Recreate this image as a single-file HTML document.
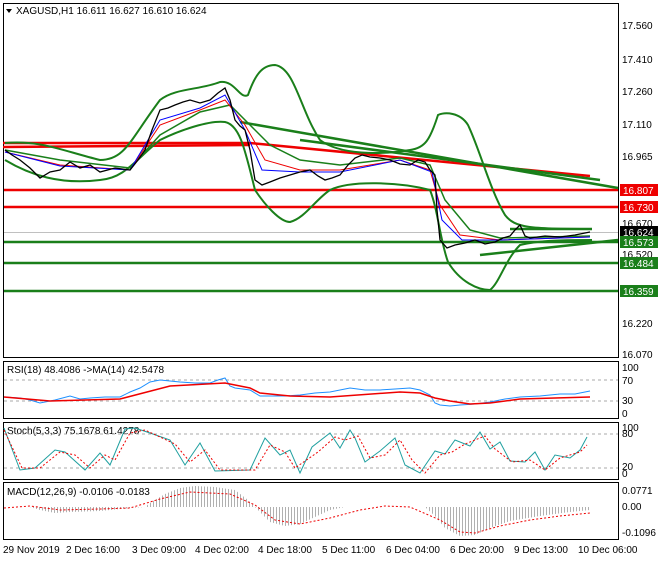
<!DOCTYPE html>
<html><head><style>
body{margin:0;width:660px;height:560px;background:#fff;font-family:"Liberation Sans",sans-serif;overflow:hidden}
svg text{font-family:"Liberation Sans",sans-serif;font-size:10px}
</style></head><body>
<svg width="660" height="560" xmlns="http://www.w3.org/2000/svg">
<defs>
<pattern id="hs" width="3" height="10" patternUnits="userSpaceOnUse"><rect x="0" y="0" width="1" height="10" fill="#b0b0b0"/></pattern>
</defs>
<rect width="660" height="560" fill="#fff"/>
<g fill="none" stroke="#000" stroke-width="1">
<rect x="3.5" y="3.5" width="615" height="354"/>
<rect x="3.5" y="361.5" width="615" height="57"/>
<rect x="3.5" y="422.5" width="615" height="57"/>
<rect x="3.5" y="482.5" width="615" height="57"/>
</g>
<polygon points="6,9 12,9 9,13" fill="#000"/>
<text x="16" y="14" fill="#000">XAGUSD,H1  16.611 16.627 16.610 16.624</text>
<line x1="4" y1="232.5" x2="618" y2="232.5" stroke="#c0c0c0"/>
<g stroke-width="2.5">
<line x1="4" y1="190" x2="618" y2="190" stroke="#e00"/>
<line x1="4" y1="207" x2="618" y2="207" stroke="#e00"/>
<line x1="4" y1="242" x2="618" y2="242" stroke="#1a7f1a"/>
<line x1="4" y1="263" x2="618" y2="263" stroke="#1a7f1a"/>
<line x1="4" y1="291" x2="618" y2="291" stroke="#1a7f1a"/>
</g>
<g fill="none" stroke-width="2.5">
<polyline points="3,143 250,143 590,176" stroke="#e00"/>
<polyline points="3,147 250,145" stroke="#e00"/>
<line x1="240" y1="122" x2="618" y2="188" stroke="#1a7f1a"/>
<line x1="300" y1="140" x2="600" y2="180" stroke="#1a7f1a"/>
<line x1="480" y1="255" x2="618" y2="240" stroke="#1a7f1a"/>
<line x1="510" y1="229" x2="592" y2="229" stroke="#1a7f1a"/>
<path d="M5,143 C40,140 60,150 100,160 C125,160 130,140 160,100 C175,88 200,90 220,82 C235,80 240,100 248,95 C255,75 262,65 275,65 C295,68 300,110 320,140 C340,155 380,155 410,150 C425,148 430,140 438,115 C445,112 460,112 468,125 C480,150 490,190 505,215 C515,228 530,229 592,229" stroke="#1a7f1a" stroke-width="2"/>
<path d="M5,160 C30,175 60,185 100,180 C125,178 135,160 160,140 C180,130 210,120 225,122 C240,125 245,150 255,190 C265,205 280,222 290,222 C305,218 315,200 330,190 C350,180 400,182 430,190 C438,210 440,240 448,262 C460,282 478,290 490,290 C500,282 505,260 520,245 C540,240 570,240 592,240" stroke="#1a7f1a" stroke-width="2"/>
<polyline points="5,150 60,160 130,168 160,135 200,112 230,105 250,125 270,145 300,160 340,165 400,158 430,165 445,200 470,230 500,238 590,236" stroke="#1a7f1a" stroke-width="1.5"/>
<polyline points="5,152 60,165 130,170 160,125 200,110 225,100 245,125 265,160 300,170 340,170 400,160 430,170 440,205 460,235 500,240 590,237" stroke="#e00" stroke-width="1"/>
<polyline points="5,152 60,166 130,170 160,120 200,108 225,95 245,130 262,170 300,172 340,172 400,160 432,172 442,220 462,240 500,240 590,237" stroke="#00f" stroke-width="1"/>
<polyline points="5,150 12,155 20,160 30,168 40,178 50,172 60,170 70,162 80,168 90,165 100,172 115,168 130,170 138,160 145,150 152,130 160,110 168,108 175,105 183,102 190,100 200,103 210,100 218,93 225,88 230,100 235,120 240,126 245,130 250,150 255,180 262,185 270,182 280,178 290,175 300,172 310,170 318,176 325,180 332,178 340,175 348,165 355,158 362,155 370,157 380,158 390,160 400,164 410,165 418,160 425,162 430,170 435,175 437,210 440,240 447,248 455,245 465,243 475,240 485,244 495,242 503,238 510,236 515,230 520,225 525,236 530,238 545,236 560,237 575,235 590,232" stroke="#000" stroke-width="1.3"/>
</g>
<g fill="#000">
<text x="622" y="29">17.560</text><text x="622" y="63">17.410</text>
<text x="622" y="95">17.260</text><text x="622" y="128">17.110</text>
<text x="622" y="160">16.965</text><text x="622" y="227">16.670</text>
<text x="622" y="258">16.520</text><text x="622" y="327">16.220</text>
<text x="622" y="358">16.070</text>
</g>
<rect x="620" y="184" width="38" height="12" fill="#e00"/><text x="623" y="194" fill="#fff">16.807</text>
<rect x="620" y="201" width="38" height="12" fill="#e00"/><text x="623" y="211" fill="#fff">16.730</text>
<rect x="620" y="226" width="38" height="12" fill="#000"/><text x="623" y="236" fill="#fff">16.624</text>
<rect x="620" y="236" width="38" height="12" fill="#1a7f1a"/><text x="623" y="246" fill="#fff">16.573</text>
<rect x="620" y="257" width="38" height="12" fill="#1a7f1a"/><text x="623" y="267" fill="#fff">16.484</text>
<rect x="620" y="285" width="38" height="12" fill="#1a7f1a"/><text x="623" y="295" fill="#fff">16.359</text>
<!-- RSI -->
<text x="7" y="373">RSI(18) 48.4086  -&gt;MA(14) 42.5478</text>
<g stroke="#aaa" stroke-dasharray="3,3"><line x1="4" y1="380" x2="618" y2="380"/><line x1="4" y1="401" x2="618" y2="401"/></g>
<polyline fill="none" stroke="#1e90ff" points="4,397 20,398 30,400 40,403 55,400 70,396 80,399 90,398 105,397 120,397 130,392 140,388 150,382 160,380 170,381 180,382 195,383 210,383 218,380 225,378 230,386 235,388 250,390 260,396 270,396 285,396 300,395 315,393 330,392 340,390 350,388 365,390 380,390 395,389 410,388 420,390 430,395 435,403 440,405 450,406 460,405 475,404 490,402 505,399 520,397 540,396 560,394 575,394 590,391"/>
<polyline fill="none" stroke="#e00" stroke-width="1.5" points="4,397 50,401 120,399 170,386 225,383 250,388 260,393 290,396 330,397 400,392 420,393 435,398 450,401 470,404 490,403 520,399 590,397"/>
<g fill="#000"><text x="622" y="371">100</text><text x="622" y="384">70</text><text x="622" y="404">30</text><text x="622" y="417">0</text></g>
<!-- Stoch -->
<text x="7" y="434">Stoch(5,3,3) 75.1678 61.4278</text>
<g stroke="#aaa" stroke-dasharray="3,3"><line x1="4" y1="434" x2="618" y2="434"/><line x1="4" y1="468" x2="618" y2="468"/></g>
<polyline fill="none" stroke="#20a0a0" points="4,428 20,470 35,468 55,450 65,452 85,470 100,453 110,465 125,429 135,428 150,433 170,440 185,465 200,443 215,471 250,470 265,438 280,455 290,450 300,473 312,447 330,433 340,448 350,430 355,438 365,462 380,451 395,438 405,465 420,473 435,451 445,454 455,440 470,446 480,432 490,449 500,442 510,461 525,462 535,452 545,470 555,455 570,458 580,450 587,437"/>
<polyline fill="none" stroke="#e00" stroke-dasharray="2,2" points="4,430 22,468 40,468 60,452 75,455 90,468 105,455 115,460 130,433 145,430 175,444 190,462 205,450 220,470 255,470 270,445 285,452 295,468 318,452 335,437 345,440 358,436 370,458 385,455 400,440 412,460 425,473 440,455 452,452 465,444 485,436 495,449 512,462 530,460 545,470 560,458 580,452 587,445"/>
<g fill="#000"><text x="622" y="431">100</text><text x="622" y="437">80</text><text x="622" y="470">20</text><text x="622" y="477">0</text></g>
<!-- MACD -->
<text x="7" y="495">MACD(12,26,9) -0.0106 -0.0183</text>
<polygon fill="url(#hs)" points="4,507 30,507 40,510 55,513 70,512 100,511 130,508 145,507 150,503 165,494 180,488 195,486 215,487 235,490 248,500 255,507 260,512 270,522 285,526 300,524 315,517 330,510 345,507 425,507 435,516 445,528 460,536 475,535 490,528 510,521 540,516 570,512 590,510 590,507"/>
<polyline fill="none" stroke="#e00" stroke-dasharray="2,2" points="4,508 30,506 60,510 100,509 130,508 160,499 190,492 230,494 255,505 275,520 300,524 330,518 360,510 385,506 410,507 440,520 460,532 475,533 500,526 530,520 560,516 590,513"/>
<g fill="#000"><text x="622" y="494">0.0771</text><text x="622" y="510">0.00</text><text x="622" y="536">-0.1096</text></g>
<g fill="#000">
<text x="3" y="553">29 Nov 2019</text><text x="66" y="553">2 Dec 16:00</text>
<text x="132" y="553">3 Dec 09:00</text><text x="195" y="553">4 Dec 02:00</text>
<text x="258" y="553">4 Dec 18:00</text><text x="322" y="553">5 Dec 11:00</text>
<text x="386" y="553">6 Dec 04:00</text><text x="450" y="553">6 Dec 20:00</text>
<text x="514" y="553">9 Dec 13:00</text><text x="578" y="553">10 Dec 06:00</text>
</g>
</svg>
</body></html>
